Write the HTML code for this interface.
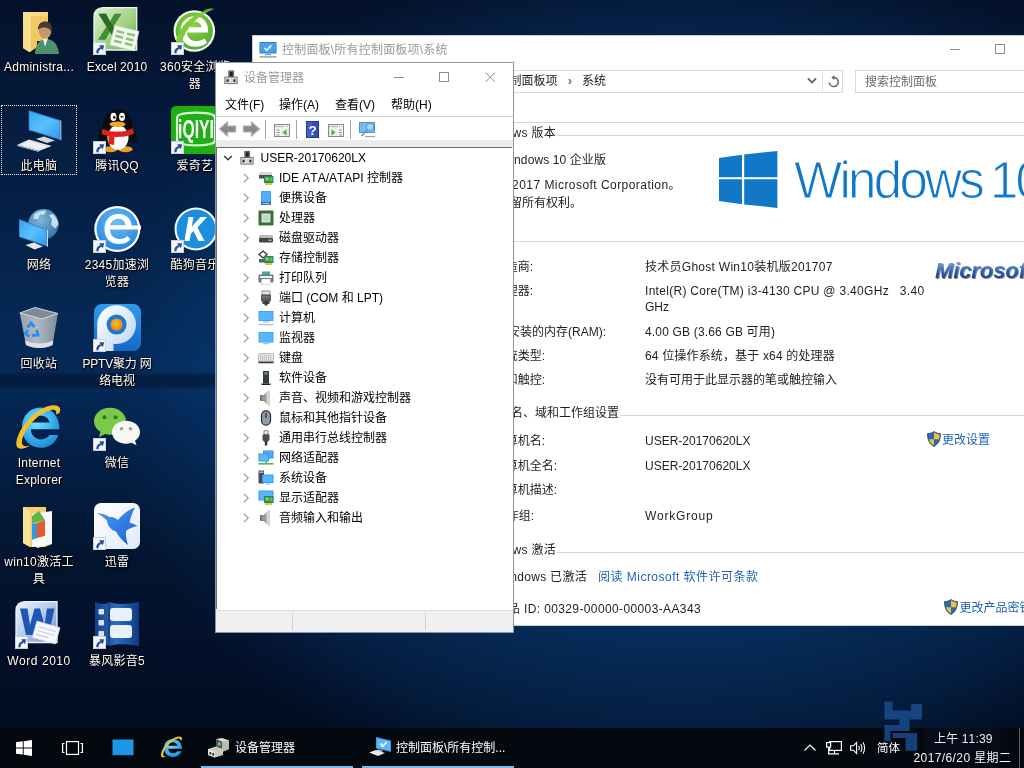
<!DOCTYPE html>
<html lang="zh-CN">
<head>
<meta charset="utf-8">
<title>桌面</title>
<style>
*{box-sizing:border-box;margin:0;padding:0}
html,body{width:1024px;height:768px;overflow:hidden}
body{position:relative;font-family:"Liberation Sans","Noto Sans CJK SC",sans-serif;font-size:12px;color:#000;background:#041c40;font-kerning:none;text-rendering:optimizeSpeed;-webkit-font-smoothing:antialiased}
.a{position:absolute;white-space:nowrap}
#icons,#sys,#dm,#tb{will-change:transform}
svg{display:block;overflow:visible}
#wall{position:absolute;left:0;top:0;width:1024px;height:768px;
 background:
  linear-gradient(180deg, rgba(2,14,36,0) 371px, rgba(2,14,36,.5) 376px, rgba(2,14,36,.5) 385px, rgba(2,14,36,0) 390px),
  radial-gradient(ellipse 570px 450px at 680px 385px, rgba(10,84,156,.5) 0%, rgba(10,84,156,.46) 50%, rgba(10,84,156,.3) 70%, rgba(10,84,156,.2) 82%, rgba(10,84,156,.08) 92%, rgba(10,84,156,0) 100%),
  linear-gradient(180deg,#04112a 0px,#041634 60px,#041c40 150px,#052752 300px,#052a5a 370px,#042048 450px,#03152f 560px,#03102a 650px,#020c20 728px);
}
/* desktop icons */
.di{position:absolute;width:78px;height:90px;color:#fff;font-size:12px;line-height:17px;text-shadow:1px 1px 1px rgba(0,0,0,.95),0 1px 3px rgba(0,0,0,.9),0 0 2px rgba(0,0,0,.7);}
.di svg{position:absolute;left:15px;top:0;width:48px;height:48px}
.di span{position:absolute;left:-11px;width:100px;top:52px;text-align:center;white-space:nowrap;letter-spacing:.25px}
.sel{border:1px dotted #e8eef6;background:rgba(90,130,190,.04)}
.di svg text{text-shadow:none}
/* taskbar */
#tb{position:absolute;left:0;top:728px;width:1024px;height:40px;background:#04080f;color:#fff;}
.pg2{position:absolute;left:0;top:-728px;width:1024px;height:768px}
.tt{line-height:18px;color:#fff}
/* windows */
.win{position:absolute;background:#fff;overflow:hidden}
#sys{left:252px;top:35px;width:780px;height:591px;border:1px solid #c9ced6;border-right:0}
#dm{left:215px;top:62px;width:299px;height:571px;border:1px solid #8e96a6;}
.pg{position:absolute;left:-253px;top:-36px;width:1024px;height:768px}
#sys .tx{line-height:18px;color:#1e1e1e}
#sys .lk{line-height:18px;color:#1f62b0}
#sys .hl{height:1px;background:#d6d6d6}
#sys .sep{color:#666;margin:0 10px 0 10.5px;font-size:12px;font-weight:bold}
.wlogo{font-size:51px;line-height:58px;color:#1078c6;letter-spacing:-2.7px;word-spacing:-3.5px;-webkit-text-stroke:1px #fff}
.mslogo{font-size:22px;line-height:26px;font-weight:bold;font-style:italic;letter-spacing:-.1px;color:#2a5ea6;background:linear-gradient(180deg,#6f9fdc 20%,#2f62ae 50%,#173a7c 85%);-webkit-background-clip:text;background-clip:text;-webkit-text-fill-color:transparent;filter:drop-shadow(1px 1px .6px rgba(30,45,80,.6))}
/* device manager */
#dm .title{left:28px;top:6px;font-size:12px;line-height:18px;color:#999}
#dm .menu{top:33px;line-height:18px;font-size:12px}
#dm .tbar{left:0;top:53px;width:297px;height:25px;background:#fff;border-top:1px solid #cfcfcf}
#dm .gap{left:0;top:77px;width:297px;height:7px;background:#ececec}
#dm .tree{left:0px;top:84px;width:296px;height:462px;background:#fff;border-top:1px solid #6a6d72;border-left:1px solid #6a6d72}
#dm .status{left:0;top:547px;width:297px;height:22px;background:#f0f0f0;border-top:1px solid #dcdcdc}
.row{position:absolute;left:0;height:20px;line-height:20px;white-space:nowrap;font-size:12px}
.row .ch{position:absolute;left:24px;top:5px;width:10px;height:10px}
.row .ic{position:absolute;left:41px;top:2px;width:16px;height:16px}
.row .tx{position:absolute;left:62px;top:0}
</style>
</head>
<body>
<div id="wall"></div>
<svg width="0" height="0" style="position:absolute"><defs>
<linearGradient id="gFold" x1="0" y1="0" x2="1" y2="1"><stop offset="0" stop-color="#fbe39a"/><stop offset="1" stop-color="#efc45c"/></linearGradient>
<linearGradient id="gScr" x1="0" y1="0" x2="1" y2="1"><stop offset="0" stop-color="#3aa5f5"/><stop offset=".5" stop-color="#5cc0ff"/><stop offset="1" stop-color="#2e9bf0"/></linearGradient>
<radialGradient id="g360" cx=".45" cy=".35" r=".75"><stop offset="0" stop-color="#8ed448"/><stop offset="1" stop-color="#4aa52a"/></radialGradient>
<radialGradient id="g2345" cx=".5" cy=".35" r=".75"><stop offset="0" stop-color="#6cc0f8"/><stop offset="1" stop-color="#1f7fd8"/></radialGradient>
<linearGradient id="gXl" x1="0" y1="0" x2="1" y2="1"><stop offset="0" stop-color="#e4f0d8"/><stop offset=".5" stop-color="#a8d48e"/><stop offset="1" stop-color="#5fae4c"/></linearGradient>
<linearGradient id="gWd" x1="0" y1="0" x2="1" y2="1"><stop offset="0" stop-color="#eef3fb"/><stop offset=".5" stop-color="#b4c8ea"/><stop offset="1" stop-color="#5f8ad0"/></linearGradient>
<linearGradient id="gPP" x1="0" y1="0" x2="0" y2="1"><stop offset="0" stop-color="#2f9cec"/><stop offset="1" stop-color="#1668c8"/></linearGradient>
<linearGradient id="gPw" x1="0" y1="0" x2="1" y2="1"><stop offset="0" stop-color="#ffffff"/><stop offset="1" stop-color="#b8d4f0"/></linearGradient>
<radialGradient id="gOr" cx=".45" cy=".4" r=".6"><stop offset="0" stop-color="#ffc21a"/><stop offset="1" stop-color="#f07c0a"/></radialGradient>
<radialGradient id="gIE" cx=".4" cy=".35" r=".8"><stop offset="0" stop-color="#7fe0ff"/><stop offset=".6" stop-color="#2fa8ea"/><stop offset="1" stop-color="#1a78c8"/></radialGradient>
<linearGradient id="gBin" x1="0" y1="0" x2="1" y2="0"><stop offset="0" stop-color="#a6afb8"/><stop offset=".45" stop-color="#c3c9cf"/><stop offset="1" stop-color="#8e98a2"/></linearGradient>
<linearGradient id="gXun" x1="0" y1="0" x2="1" y2="1"><stop offset="0" stop-color="#ffffff"/><stop offset="1" stop-color="#dfeaf8"/></linearGradient>
<linearGradient id="gBird" x1="0" y1="0" x2="1" y2="1"><stop offset="0" stop-color="#4a9cf0"/><stop offset="1" stop-color="#1f5fd8"/></linearGradient>
<linearGradient id="gBf" x1="0" y1="0" x2="1" y2="0"><stop offset="0" stop-color="#123f86"/><stop offset=".5" stop-color="#2a6fc0"/><stop offset="1" stop-color="#0f3a80"/></linearGradient>
<radialGradient id="gGlobe" cx=".4" cy=".35" r=".75"><stop offset="0" stop-color="#7fb8d8"/><stop offset="1" stop-color="#2f6f9c"/></radialGradient>
<symbol id="sc" viewBox="0 0 13 13"><rect x="0" y="0" width="13" height="13" fill="#f4f6f8"/><rect x=".5" y=".5" width="12" height="12" fill="none" stroke="#c9d0d8"/><path d="M3.300 11.300 C3 8 4.600 5.800 7.300 5.200 L6.200 3.300 L11.200 3.200 L9.900 8.200 L8.700 6.700 C6.600 7.300 5.400 8.900 5.600 11.300Z" fill="#274f9c"/></symbol>
</defs></svg>
<div id="icons">
<div class="a sel" style="left:1px;top:105px;width:76px;height:70px"></div>
<div class="di" style="left:0px;top:7px"><svg viewBox="0 0 48 48" width="48" height="48"><path d="M8 5 H33 V34 H22 V40 L14 45 L8 41Z" fill="url(#gFold)"/><path d="M8 5 L15 9 V45 L8 41Z" fill="#f7dc8a"/><path d="M15 9 H33 V34 H22 V40 L15 45Z" fill="#f1c862"/><path d="M15 9 V45" stroke="#fff3c4" stroke-width=".8"/>
<path d="M20 47 C20 37 25 32 31 32 C38 32 43 37 44 47Z" fill="#4e8f6c"/><path d="M28 32 L30 40 L32.500 32Z" fill="#eef4ee"/><ellipse cx="30" cy="24" rx="6.300" ry="7.500" fill="#c9966f"/><path d="M23 23 C22.500 15.500 28 14 31 14.500 C36 15 38 19 36.500 26 C35.500 22 33 20.500 28 20.500 C25.500 20.500 24 21.500 23 23Z" fill="#463c34"/></svg><span>Administra...</span></div>
<div class="di" style="left:78px;top:7px"><svg viewBox="0 0 48 48" width="48" height="48"><path d="M1 9.500 C1 4 4.500 0.700 10 0.700 H43.700 V43 H1Z" fill="url(#gXl)"/><path d="M1 9.500 C1 4 4.500 0.700 10 0.700 H43.700 V43 H1Z" fill="none" stroke="#eef6e8" stroke-width="1.300"/><path d="M5.500 6.700 H13 L17 14.500 L21.500 6.700 H28.700 L20.500 19.500 L29 32.700 H21.500 L17 24.700 L12.500 32.700 H5 L13.500 19.500Z" fill="#3f9230"/><path d="M5.500 6.700 H13 L17 14.500 L20.500 19.500 L29 32.700 H21.500 L17 24.700 L13.500 19.500Z" fill="#2a6e24"/><g transform="rotate(14 31 31)"><rect x="19" y="21" width="25" height="20" fill="#f4f9f1" stroke="#cfe3c8" stroke-width=".6"/><path d="M22 26h8M33 26h8M22 31h8M33 31h8M22 36h8M33 36h8" stroke="#8fc07e" stroke-width="2.500"/></g><use href="#sc" x="0" y="35" width="13" height="13"/></svg><span style="letter-spacing:.1px">Excel 2010</span></div>
<div class="di" style="left:156px;top:7px"><svg viewBox="0 0 48 48" width="48" height="48"><circle cx="23.300" cy="24" r="20.800" fill="#f4fbef"/><circle cx="23.300" cy="24" r="18.600" fill="url(#g360)"/><g transform="translate(23.300 24.500) scale(1.150) translate(-23.500 -25.700)"><path d="M35.500 26.500 H17 C17.600 31.500 21 34 25 34 C28 34 30.500 33 32.500 31.500 L34.500 35.500 C32 37.800 28.500 39 24.500 39 C16.500 39 11.500 33.500 11.500 25.500 C11.500 18 16.500 12.500 24 12.500 C31.500 12.500 35.800 18 35.500 26.500Z M17.300 22 H29.800 C29.300 19 27.200 17.200 24 17.200 C20.800 17.200 18.200 19 17.300 22Z" fill="#fff"/></g><path d="M5 35 C7 21 21 5 43 2 C29 7 15 19 10 37Z" fill="#7ccc3c"/><path d="M43 2 C39 1 35 2 31 4 C36 3.500 40 3 43 2Z" fill="#5db52e"/><use href="#sc" x="0" y="35" width="13" height="13"/></svg><span>360安全浏览<br>器</span></div>
<div class="di" style="left:0px;top:106px"><svg viewBox="0 0 48 48" width="48" height="48"><path d="M13.700 4.200 L45.400 14.200 V34 L13.700 24.200Z" fill="#2b8fe0"/><path d="M14.700 5.700 L44.300 15 V32.500 L14.700 23.200Z" fill="url(#gScr)"/><path d="M45.400 14.200 L46.300 14.600 V34.400 L45.400 34Z" fill="#d9e6f2"/><path d="M20.800 33 L29 30.600 L40 34.500 L32 37Z" fill="#d6d9dc"/><path d="M2 39 L14 33.500 L36.600 40 L24 45Z" fill="#eef0f2"/><path d="M5 39 L14 35 L33 40.200 L24 43.800Z" fill="none" stroke="#c6cace" stroke-width=".7" stroke-dasharray="1.500 1"/><path d="M2 39 L24 45 V46 L2 40Z" fill="#b4b9be"/></svg><span>此电脑</span></div>
<div class="di" style="left:78px;top:106px"><svg viewBox="0 0 48 48" width="48" height="48"><g transform="translate(0.500 -4.500) scale(1 1.060)"><ellipse cx="24" cy="26" rx="15" ry="19" fill="#0c0c0c"/><ellipse cx="9.500" cy="31" rx="4" ry="9" transform="rotate(18 9.500 31)" fill="#0c0c0c"/><ellipse cx="38.500" cy="31" rx="4" ry="9" transform="rotate(-18 38.500 31)" fill="#0c0c0c"/><ellipse cx="17" cy="45" rx="7" ry="2.800" fill="#e9a11a"/><ellipse cx="32" cy="45" rx="7" ry="2.800" fill="#e9a11a"/><ellipse cx="24.500" cy="34" rx="10.500" ry="11.500" fill="#fdfdfd"/><ellipse cx="20" cy="14.500" rx="3" ry="4" fill="#fff"/><ellipse cx="28.500" cy="14.500" rx="3" ry="4" fill="#fff"/><circle cx="20.800" cy="15" r="1.300" fill="#111"/><path d="M27 15 q1.500 -1.500 3 0" stroke="#111" stroke-width="1" fill="none"/><ellipse cx="24" cy="21.500" rx="8" ry="2.600" fill="#f3a91c"/><path d="M9 25.500 C15 29.500 33 29.500 39.500 25 L40.500 30 C33 34.500 16 34.500 8 30.500Z" fill="#e0201c"/><path d="M15 32 L21 33 L20.500 41 L15 40Z" fill="#e0201c"/></g><use href="#sc" x="0" y="35" width="13" height="13"/></svg><span>腾讯QQ</span></div>
<div class="di" style="left:156px;top:106px"><svg viewBox="0 0 48 48" width="48" height="48"><rect x="0" y="0" width="48" height="48" rx="5" fill="#1fae14"/><path d="M9 8.500 C18 6 34 6 41 8.500 C43.500 9.200 44 10.500 44 12.500 V33.500 C44 36 43 37 41 37.500 C34 40 18 40 9 37.500 C6.500 36.800 6 35.500 6 33.500 V12.500 C6 10.500 6.800 9.100 9 8.500Z" fill="none" stroke="#d9f5d4" stroke-width="2.200"/><text x="25" y="32.300" font-family="Liberation Sans,sans-serif" font-weight="bold" font-size="25" fill="#fff" text-anchor="middle" textLength="36" lengthAdjust="spacingAndGlyphs">iQIYI</text><use href="#sc" x="0" y="35" width="13" height="13"/></svg><span>爱奇艺</span></div>
<div class="di" style="left:0px;top:205px"><svg viewBox="0 0 48 48" width="48" height="48"><circle cx="28.400" cy="19.300" r="15.300" fill="url(#gGlobe)"/><path d="M19 9.500 C23 6 27.500 5 31.500 5.500 L29 10 L25 9.500 L23 14 L18.500 14Z M34 10 L38 9 C41 12 43 15.500 43.500 19.500 L40 23.500 L36 19.500 L37 14.500Z" fill="#c4e0ee"/><path d="M4 14 L32 24.500 V41.500 L4 32Z" fill="#2b8fe0"/><path d="M5 15.500 L31 25.300 V40 L5 31.200Z" fill="url(#gScr)"/><path d="M32 24.500 L33 25 V41.800 L32 41.500Z" fill="#cfe0ee"/><path d="M10.500 40 L19 37.500 L28 41.500 L19.500 44.500Z" fill="#e4e7ea"/></svg><span>网络</span></div>
<div class="di" style="left:78px;top:205px"><svg viewBox="0 0 48 48" width="48" height="48"><circle cx="24.300" cy="24" r="23" fill="#fff"/><circle cx="24.300" cy="24" r="20.800" fill="url(#g2345)"/><path d="M48 24.500 H17 C17.500 30.500 21 34 26.500 34 C30 34 32.500 32.800 34.500 31 L37.500 34.500 C34.500 37.500 30.500 39 26 39 C17 39 11.500 33 11.500 24 C11.500 15 17 9 25.500 9 C33.500 9 38.500 14.500 38.500 20.500 H48Z M17.300 20.300 H32.500 C31.800 16 29.300 13.800 25.500 13.800 C21.700 13.800 18.300 16 17.300 20.300Z" fill="#fff"/><use href="#sc" x="0" y="35" width="13" height="13"/></svg><span>2345加速浏<br>览器</span></div>
<div class="di" style="left:156px;top:205px"><svg viewBox="0 0 48 48" width="48" height="48"><circle cx="25" cy="24" r="21.500" fill="#fff"/><circle cx="25" cy="24" r="19.500" fill="#1b8ee0"/><path d="M17.500 12 H22.500 L20.800 21.500 L29.500 12 H36 L26.500 22.500 L33.500 36 H27.500 L22.500 26 L19.800 29 L18.500 36 H13.500Z" fill="#fff"/><use href="#sc" x="0" y="35" width="13" height="13"/></svg><span>酷狗音乐</span></div>
<div class="di" style="left:0px;top:304px"><svg viewBox="0 0 48 48" width="48" height="48"><path d="M4.800 9 L42.900 9.500 L37.500 41 C30 45 19 45 11 41Z" fill="url(#gBin)" opacity=".9"/><path d="M4.800 9 L20 3.500 L42.900 9.500 L27 15Z" fill="#7f8a94" stroke="#d4d9de" stroke-width="1"/><path d="M10 36.500 C19 40.500 30 40.500 38.300 36.500 L37.500 41 C30 45 19 45 11 41Z" fill="#dde1e5"/><g fill="none" stroke="#2a8ee8" stroke-width="2.800"><path d="M12.500 23.500 l3.500 -4.500 l3.500 4"/><path d="M21.500 26 l1.500 5 l-6 .5"/><path d="M14.500 32.500 l-4 -3 l2 -3.500"/></g></svg><span>回收站</span></div>
<div class="di" style="left:78px;top:304px"><svg viewBox="0 0 48 48" width="48" height="48"><rect x="1" y="0" width="47" height="47" rx="8" fill="url(#gPP)"/><clipPath id="cpp"><rect x="1" y="0" width="47" height="47" rx="8"/></clipPath><g clip-path="url(#cpp)"><path d="M4.200 48 V20.600 A19.400 19.400 0 1 1 20.500 39.700 V48Z" fill="url(#gPw)"/></g><circle cx="23.600" cy="20.600" r="10" fill="#1b78d4"/><circle cx="23.600" cy="20.600" r="6.100" fill="url(#gOr)"/><use href="#sc" x="0" y="35" width="13" height="13"/></svg><span style="letter-spacing:-.2px">PPTV聚力 网<br>络电视</span></div>
<div class="di" style="left:0px;top:403px"><svg viewBox="0 0 48 48" width="48" height="48"><g transform="translate(0 -4.500) scale(1.040 1.120) translate(-1.300 0)"><path d="M44 27.500 H16.500 C17 33 20.500 36.500 26 36.500 C29.500 36.500 32.500 35 34.500 32.500 H43 C40.500 39.500 34 44 26 44 C15.500 44 8 36.500 8 26 C8 15.500 15.500 8 26 8 C36.500 8 44 15.500 44 27.500Z M17.500 21.500 H34.500 C33.500 17.500 30.500 15.500 26 15.500 C21.500 15.500 18.500 17.500 17.500 21.500Z" fill="url(#gIE)"/></g><path d="M44.500 10 C47.500 3 41 0 30.500 4 C17 9.500 3.500 26 1.500 38.500 C0 47 7 47.500 15 42.500 C8.500 44.500 5.500 42 7.500 35.500 C10.500 25.500 20.500 13 31.500 8.500 C38.500 5.500 42.500 6.500 41 11.500Z" fill="#f0c02c"/></svg><span>Internet <br>Explorer</span></div>
<div class="di" style="left:78px;top:403px"><svg viewBox="0 0 48 48" width="48" height="48"><g transform="translate(0 2.700)"><path d="M17 2 C26 2 33 8 33 15.500 C33 23 26 29 17 29 C15.200 29 13.500 28.800 12 28.300 L6 31.500 L7.500 26 C3.500 23.500 1 19.800 1 15.500 C1 8 8 2 17 2Z" fill="#7bc84a"/><circle cx="11.500" cy="11.500" r="2" fill="#2e7d1e"/><circle cx="22.500" cy="11.500" r="2" fill="#2e7d1e"/><path d="M33 15 C41 15 47 20 47 26.500 C47 30 45 33 42 35 L43.500 39.500 L38.500 37 C36.800 37.600 35 38 33 38 C25 38 19 33 19 26.500 C19 20 25 15 33 15Z" fill="#f6f6f2"/><circle cx="28.500" cy="23" r="1.700" fill="#9a9a9a"/><circle cx="37.500" cy="23" r="1.700" fill="#9a9a9a"/></g><use href="#sc" x="0" y="35" width="13" height="13"/></svg><span>微信</span></div>
<div class="di" style="left:0px;top:502px"><svg viewBox="0 0 48 48" width="48" height="48"><path d="M8 5 H31 V10 H37 V42 L30 45 L15 45 L8 41Z" fill="#f2cf72"/><path d="M8 5 L15 9 V45 L8 41Z" fill="#f8e19a"/><path d="M17 12 L37 9 V42 L17 45Z" fill="#f7f7f5"/><path d="M17 14 L24 9 L30 18 L17 22Z" fill="#5fb548"/><path d="M17 22 L22 21 V36 L17 38Z" fill="#2f9ae0"/><path d="M22 21 L30 18 V34 L22 36Z" fill="#e8582c"/><path d="M17 38 L30 34 V44 L22 46Z" fill="#fbfbfb"/></svg><span>win10激活工<br>具</span></div>
<div class="di" style="left:78px;top:502px"><svg viewBox="0 0 48 48" width="48" height="48"><rect x="1" y="1" width="46" height="46" rx="7" fill="url(#gXun)"/><path d="M4 11 C9 11.500 13 12.500 16.500 15 C20 14.500 23 16 25 18 C30 12 36 7.500 42 5.500 C39 11 37.500 16 36.500 20.500 C39.500 21.500 42 22.500 44.500 24 C40 25 36 26.500 33 29 C32.500 33.500 33.500 38 35 43 C30 39 25.500 34.500 23 29.500 C18 28 14.500 24 14 18.500 C11 15.500 8 13.500 4 11Z" fill="url(#gBird)"/><use href="#sc" x="0" y="35" width="13" height="13"/></svg><span>迅雷</span></div>
<div class="di" style="left:0px;top:601px"><svg viewBox="0 0 48 48" width="48" height="48"><path d="M1 9.500 C1 4 4.500 0.700 10 0.700 H42 V41.500 H1Z" fill="url(#gWd)"/><path d="M1 9.500 C1 4 4.500 0.700 10 0.700 H42 V41.500 H1Z" fill="none" stroke="#eef3fb" stroke-width="1.300"/><path d="M5 7.500 H12.500 L15 24 L19.500 7.500 H25 L29.500 24 L32 7.500 H39.500 L33.500 34 H26 L22.200 19.500 L18.500 34 H11Z" fill="#1f56b4"/><g transform="rotate(16 31 32)"><rect x="19" y="23" width="24" height="17" fill="#f7f9fd" stroke="#cfdaf0" stroke-width=".6"/><path d="M22 28h18M22 32h18M22 36h13" stroke="#c4d2ea" stroke-width="1.200"/></g><use href="#sc" x="0" y="35" width="13" height="13"/></svg><span style="letter-spacing:.55px">Word 2010</span></div>
<div class="di" style="left:78px;top:601px"><svg viewBox="0 0 48 48" width="48" height="48"><path d="M2 1 C8 3.500 12 3.500 16 1 C24 3.500 32 3.500 46 1 V45 C32 42.500 24 42.500 16 45 C12 42.500 8 42.500 2 45Z" fill="url(#gBf)"/><rect x="5.500" y="8" width="5.500" height="5.500" rx=".8" fill="#d6e4f6"/><rect x="5.500" y="19" width="5.500" height="5.500" rx=".8" fill="#d6e4f6"/><rect x="5.500" y="30" width="5.500" height="5.500" rx=".8" fill="#d6e4f6"/><rect x="17" y="7" width="22" height="13" rx="3" fill="#e9f0fa"/><rect x="17" y="24" width="22" height="13" rx="3" fill="#e9f0fa"/><path d="M16 1 V45" stroke="#0b2f6c" stroke-width="1"/><use href="#sc" x="0" y="35" width="13" height="13"/></svg><span>暴风影音5</span></div>
</div>
<div class="win" id="sys"><div class="pg">
<svg class="a" style="left:259px;top:41px" width="18" height="18" viewBox="0 0 18 18"><rect x="1" y="1.500" width="16" height="10.500" fill="#4aa3ea" stroke="#2f7fc8" stroke-width="1"/><path d="M5.500 7 l2.300 2.300 4.500-5" stroke="#eaf6ff" stroke-width="1.600" fill="none"/><rect x="6" y="13" width="6" height="1.200" fill="#5aa0d8"/><rect x="0.500" y="15.200" width="17" height="1.400" fill="#9a9a9a"/></svg>
<div class="a" style="left:282px;top:41px;line-height:18px;color:#999;letter-spacing:.2px">控制面板\所有控制面板项\系统</div>
<svg class="a" style="left:950px;top:44px" width="102" height="11" viewBox="0 0 102 11"><path d="M0 5.500h10" stroke="#8c8c8c" fill="none"/><rect x="45.500" y="0.500" width="9" height="9" fill="none" stroke="#8c8c8c"/><path d="M91.500 0.500 l9.500 9.500 M101 0.500 L91.500 10" stroke="#8c8c8c" fill="none"/></svg>
<svg class="a" style="left:262px;top:72px" width="90" height="18" viewBox="0 0 90 18"><path d="M13 9H3M7 5 3 9l4 4" stroke="#8a8a8a" stroke-width="1.300" fill="none"/><path d="M29 9h10M35 5l4 4-4 4" stroke="#c2c2c2" stroke-width="1.300" fill="none"/><path d="M52 8l3 3 3-3" stroke="#8a8a8a" fill="none"/><path d="M74 14V4M70 8l4-4 4 4" stroke="#8a8a8a" stroke-width="1.300" fill="none"/></svg>
<div class="a" style="left:357px;top:70px;width:486px;height:23px;border:1px solid #d9d9d9;background:#fff"></div>
<svg class="a" style="left:362px;top:73px" width="16" height="16" viewBox="0 0 18 18"><rect x="1" y="1.500" width="16" height="10.500" fill="#4aa3ea" stroke="#2f7fc8"/><path d="M5.500 7 l2.300 2.300 4.500-5" stroke="#eaf6ff" stroke-width="1.600" fill="none"/><rect x="0.500" y="15" width="17" height="1.400" fill="#9a9a9a"/></svg>
<div class="a" style="right:418px;top:72px;line-height:18px;color:#1a1a1a">所有控制面板项<span class="sep">›</span>系统</div>
<i class="a" style="left:822px;top:71px;width:1px;height:21px;background:#e0e0e0"></i>
<svg class="a" style="left:807px;top:77px" width="10" height="8" viewBox="0 0 10 8"><path d="M1 1.500l4 4 4-4" stroke="#6a6a6a" stroke-width="1.900" fill="none"/></svg>
<svg class="a" style="left:827px;top:74px" width="13" height="14" viewBox="0 0 13 14"><g transform="translate(13 1) scale(-1 1)"><path d="M10.800 7.500a4.500 4.500 0 1 1-4.300-5" stroke="#666" stroke-width="1.500" fill="none"/><path d="M5.500 0.300l3.200 2.300-3.200 2.300z" fill="#666"/></g></svg>
<div class="a" style="left:855px;top:70px;width:190px;height:23px;border:1px solid #d9d9d9;background:#fff"></div>
<div class="a" style="left:865px;top:73px;line-height:18px;color:#6d6d6d">搜索控制面板</div>
<i class="a hl" style="left:253px;top:122px;width:780px"></i>
<div class="a tx" style="right:468px;top:124px;letter-spacing:0.3px;">Windows 版本</div>
<i class="a hl" style="left:557px;top:135px;width:480px"></i>
<div class="a tx" style="right:418px;top:151px;letter-spacing:0.1px;">Windows 10 企业版</div>
<div class="a tx" style="right:343px;top:176px;letter-spacing:0.45px;">© 2017 Microsoft Corporation。</div>
<div class="a tx" style="right:442px;top:194px;">保留所有权利。</div>
<svg class="a" style="left:719px;top:151px" width="60" height="58" viewBox="0 0 60 58"><path d="M0 6.900 L23 3.700 V26.200 H0Z M25.200 3.400 L58.400 0 V26.200 H25.200Z M0 28.300 H23 V53.200 L0 50Z M25.200 28.300 H58.400 V56.900 L25.200 53.500Z" fill="#1078c6"/></svg>
<div class="a wlogo" style="left:794px;top:152px">Windows 10</div>
<i class="a hl" style="left:470px;top:241px;width:560px"></i>
<div class="a tx" style="right:491px;top:258px;">制造商:</div>
<div class="a tx" style="left:645px;top:258px;letter-spacing:0.27px;">技术员Ghost Win10装机版201707</div>
<div class="a tx" style="right:491px;top:282px;">处理器:</div>
<div class="a tx" style="left:645px;top:282px;letter-spacing:0.3px;">Intel(R) Core(TM) i3-4130 CPU @ 3.40GHz&nbsp;&nbsp; 3.40</div>
<div class="a tx" style="left:645px;top:298px;">GHz</div>
<div class="a tx" style="right:418px;top:323px;">已安装的内存(RAM):</div>
<div class="a tx" style="left:645px;top:323px;letter-spacing:0.17px;">4.00 GB (3.66 GB 可用)</div>
<div class="a tx" style="right:479px;top:347px;">系统类型:</div>
<div class="a tx" style="left:645px;top:347px;letter-spacing:0.16px;">64 位操作系统，基于 x64 的处理器</div>
<div class="a tx" style="right:479px;top:371px;">笔和触控:</div>
<div class="a tx" style="left:645px;top:371px;">没有可用于此显示器的笔或触控输入</div>
<div class="a mslogo" style="left:935px;top:258px">Microsoft</div>
<div class="a tx" style="right:405px;top:404px;">计算机名、域和工作组设置</div>
<i class="a hl" style="left:620px;top:415px;width:480px"></i>
<div class="a tx" style="right:479px;top:432px;">计算机名:</div>
<div class="a tx" style="left:645px;top:432px;">USER-20170620LX</div>
<div class="a tx" style="right:467px;top:457px;">计算机全名:</div>
<div class="a tx" style="left:645px;top:457px;">USER-20170620LX</div>
<div class="a tx" style="right:467px;top:481px;">计算机描述:</div>
<div class="a tx" style="right:490px;top:507px;">工作组:</div>
<div class="a tx" style="left:645px;top:507px;letter-spacing:0.78px;">WorkGroup</div>
<svg class="a" style="left:927px;top:431px" width="14" height="16" viewBox="0 0 14 16"><path d="M7 0.500 C9 2 11 2.600 13.500 2.600 C13.500 9 11.500 13 7 15.500 C2.500 13 0.500 9 0.500 2.600 C3 2.600 5 2 7 0.500Z" fill="#2b68b8" stroke="#3a3f46" stroke-width=".8"/><path d="M7 1.500 C5.200 2.700 3.500 3.300 1.400 3.400 C1.400 5.300 1.600 6.800 2 8.200 H7Z" fill="#2b68b8"/><path d="M7 1.500 C8.800 2.700 10.500 3.300 12.600 3.400 C12.600 5.300 12.400 6.800 12 8.200 H7Z" fill="#f2c13c"/><path d="M2 8.200 C2.900 11 4.500 13 7 14.500 V8.200Z" fill="#f2c13c"/></svg>
<div class="a lk" style="left:942px;top:431px">更改设置</div>
<div class="a tx" style="right:468px;top:541px;letter-spacing:0.3px;">Windows 激活</div>
<i class="a hl" style="left:557px;top:552px;width:480px"></i>
<div class="a tx" style="right:437px;top:568px;letter-spacing:0.3px;">Windows 已激活</div>
<div class="a lk" style="left:598px;top:568px;letter-spacing:.48px">阅读 Microsoft 软件许可条款</div>
<div class="a tx" style="right:323px;top:600px;letter-spacing:0.38px;">产品 ID: 00329-00000-00003-AA343</div>
<svg class="a" style="left:944px;top:599px" width="14" height="16" viewBox="0 0 14 16"><path d="M7 0.500 C9 2 11 2.600 13.500 2.600 C13.500 9 11.500 13 7 15.500 C2.500 13 0.500 9 0.500 2.600 C3 2.600 5 2 7 0.500Z" fill="#2b68b8" stroke="#3a3f46" stroke-width=".8"/><path d="M7 1.500 C5.200 2.700 3.500 3.300 1.400 3.400 C1.400 5.300 1.600 6.800 2 8.200 H7Z" fill="#2b68b8"/><path d="M7 1.500 C8.800 2.700 10.500 3.300 12.600 3.400 C12.600 5.300 12.400 6.800 12 8.200 H7Z" fill="#f2c13c"/><path d="M2 8.200 C2.900 11 4.500 13 7 14.500 V8.200Z" fill="#f2c13c"/></svg>
<div class="a lk" style="left:959.500px;top:599px">更改产品密钥</div>
</div></div>
<div class="win" id="dm">
<svg class="a" style="left:8px;top:7px" viewBox="0 0 16 16" width="14" height="15"><rect x="5.5" y="0.5" width="5.5" height="7" fill="#8a8a8a" stroke="#555" stroke-width="1"/><rect x="6.500" y="1.500" width="3.500" height="5" fill="#1e1e1e"/><rect x="1" y="7.5" width="14" height="7.5" fill="#d9d9d9" stroke="#666" stroke-width="1"/><rect x="3" y="10" width="2.2" height="3" fill="#222"/><rect x="10.8" y="10" width="2.2" height="3" fill="#222"/></svg>
<div class="a title">设备管理器</div>
<svg class="a" style="left:178px;top:9px" width="102" height="11" viewBox="0 0 102 11"><path d="M0 5.5h10" stroke="#8c8c8c" stroke-width="1" fill="none"/><rect x="45.500" y="0.500" width="9" height="9" fill="none" stroke="#8c8c8c"/><path d="M91.500 0.500 l9.500 9.500 M101 0.500 L91.500 10" stroke="#8c8c8c" stroke-width="1" fill="none"/></svg>
<div class="a menu" style="left:9px">文件(F)</div>
<div class="a menu" style="left:63px">操作(A)</div>
<div class="a menu" style="left:119px">查看(V)</div>
<div class="a menu" style="left:175px">帮助(H)</div>
<div class="a tbar"></div>
<svg class="a" style="left:0;top:55px" width="297" height="23" viewBox="0 0 297 23">
<path d="M3.500 11 L11.500 4 V8 H19.500 V14 H11.500 V18 Z" fill="#898989" stroke="#adadad" stroke-width="1.200"/>
<path d="M43.500 11 L35.500 4 V8 H27.500 V14 H35.500 V18 Z" fill="#898989" stroke="#adadad" stroke-width="1.200"/>
<path d="M49.500 2v19M80.500 2v19M134.500 2v19" stroke="#a4a4a4" stroke-width="1"/>
<rect x="58.500" y="6.500" width="15" height="12" fill="#f7f8f7" stroke="#868a8e"/><path d="M59 8.500h14" stroke="#b9bcc0" stroke-width="1.600" stroke-dasharray="9 1 1 1 1 1"/><path d="M60.500 12h3M60.500 14.500h3M60.500 17h3" stroke="#8c9298" stroke-width="1"/><rect x="65" y="10.500" width="8" height="7.500" fill="#e3f1da"/><path d="M70.500 11.500 l-4 3 4 3z" fill="#5aa34a"/>
<rect x="90.500" y="3.500" width="12" height="16" fill="#3450b8" stroke="#26388c"/><rect x="91" y="4" width="5" height="15" fill="#4a68d0" opacity=".6"/><text x="96.500" y="16.500" font-family="Liberation Sans,sans-serif" font-weight="bold" font-size="13.500" fill="#fff" text-anchor="middle">?</text>
<rect x="112.500" y="6.500" width="15" height="12" fill="#f7f8f7" stroke="#868a8e"/><path d="M113 8.500h14" stroke="#b9bcc0" stroke-width="1.600" stroke-dasharray="9 1 1 1 1 1"/><rect x="113" y="10.500" width="8" height="7.500" fill="#e3f1da"/><path d="M115.500 11.500 l4 3 -4 3z" fill="#5aa34a"/><path d="M123 12h3M123 14.500h3M123 17h3" stroke="#8c9298" stroke-width="1"/>
<rect x="143.500" y="4.500" width="15" height="10" fill="#74bdf0" stroke="#4a94d0"/><circle cx="154" cy="9" r="3.600" fill="#a9dafa" stroke="#4f9bd6" stroke-width="1"/><path d="M151.500 11.500 L145.500 18" stroke="#6f8fa8" stroke-width="1.600"/><path d="M149 18.500h10" stroke="#9aa4ac" stroke-width="1.200"/>
</svg>
<div class="a gap"></div>
<div class="a tree">
<div class="row" style="top:0px"><svg viewBox="0 0 10 10" width="10" height="10" style="position:absolute;left:6px;top:5px"><path d="M1.200 3 L5 6.800 L8.800 3" fill="none" stroke="#3a3a3a" stroke-width="1.500"/></svg><svg viewBox="0 0 16 16" width="14" height="16" style="position:absolute;left:23px;top:2px"><rect x="5.5" y="0.5" width="5.5" height="7" fill="#8a8a8a" stroke="#555" stroke-width="1"/><rect x="6.500" y="1.500" width="3.500" height="5" fill="#1e1e1e"/><rect x="1" y="7.5" width="14" height="7.5" fill="#d9d9d9" stroke="#666" stroke-width="1"/><rect x="3" y="10" width="2.2" height="3" fill="#222"/><rect x="10.8" y="10" width="2.2" height="3" fill="#222"/></svg><span class="tx" style="left:43.500px">USER-20170620LX</span></div>
<div class="row" style="top:20px"><svg class="ch" viewBox="0 0 10 10" width="10" height="10"><path d="M3 0.8 L7.2 5 L3 9.2" fill="none" stroke="#a6a6a6" stroke-width="1.3"/></svg><svg class="ic" viewBox="0 0 16 16" width="16" height="16"><rect x="1" y="2" width="13" height="4" rx="1" fill="#d8d8d8"/><rect x="1" y="5" width="13" height="3.5" fill="#4a4a4a"/><rect x="6" y="6" width="9.5" height="7" fill="#2f8a3c"/><rect x="7.5" y="7.5" width="3" height="3" fill="#7fd0c8"/><rect x="11.5" y="7.5" width="3" height="4" fill="#5fb86a"/><rect x="7" y="13" width="7" height="2" fill="#e8c63a"/></svg><span class="tx">IDE ATA/ATAPI 控制器</span></div>
<div class="row" style="top:40px"><svg class="ch" viewBox="0 0 10 10" width="10" height="10"><path d="M3 0.8 L7.2 5 L3 9.2" fill="none" stroke="#a6a6a6" stroke-width="1.3"/></svg><svg class="ic" viewBox="0 0 16 16" width="16" height="16"><rect x="3" y="1" width="10" height="14" rx="1" fill="#2f9af0"/><rect x="3.6" y="1.6" width="8.8" height="10" fill="#4fb0ff"/><rect x="3" y="12" width="10" height="3" rx="1" fill="#3a5a8a"/><rect x="4.5" y="12.8" width="7" height="1.4" fill="#9cc4ee"/></svg><span class="tx">便携设备</span></div>
<div class="row" style="top:60px"><svg class="ch" viewBox="0 0 10 10" width="10" height="10"><path d="M3 0.8 L7.2 5 L3 9.2" fill="none" stroke="#a6a6a6" stroke-width="1.3"/></svg><svg class="ic" viewBox="0 0 16 16" width="16" height="16"><rect x="0.5" y="0.5" width="15" height="15" rx="1" fill="#3f6e3a"/><rect x="3.5" y="3.5" width="9" height="9" fill="#d7e6d6"/><rect x="5" y="5" width="6" height="6" fill="#c2d8c6"/></svg><span class="tx">处理器</span></div>
<div class="row" style="top:80px"><svg class="ch" viewBox="0 0 10 10" width="10" height="10"><path d="M3 0.8 L7.2 5 L3 9.2" fill="none" stroke="#a6a6a6" stroke-width="1.3"/></svg><svg class="ic" viewBox="0 0 16 16" width="16" height="16"><rect x="1" y="5" width="14" height="4" rx="1.5" fill="#b9b9b9"/><rect x="1" y="8" width="14" height="4.5" rx="1" fill="#454545"/><rect x="10.5" y="9.6" width="3" height="1.2" fill="#d0d0d0"/></svg><span class="tx">磁盘驱动器</span></div>
<div class="row" style="top:100px"><svg class="ch" viewBox="0 0 10 10" width="10" height="10"><path d="M3 0.8 L7.2 5 L3 9.2" fill="none" stroke="#a6a6a6" stroke-width="1.3"/></svg><svg class="ic" viewBox="0 0 16 16" width="16" height="16"><path d="M5 1 L9 4.5 L5 8 L1 4.5Z" fill="#fff" stroke="#333" stroke-width="1.3"/><rect x="1" y="9" width="6" height="3.5" fill="#4a5f7a"/><rect x="6" y="6" width="9.5" height="7" fill="#2f8a3c"/><rect x="7.5" y="7.5" width="3" height="3" fill="#7fd0c8"/><rect x="11.5" y="7.5" width="3" height="4" fill="#5fb86a"/><rect x="7" y="13" width="7" height="2" fill="#e8c63a"/></svg><span class="tx">存储控制器</span></div>
<div class="row" style="top:120px"><svg class="ch" viewBox="0 0 10 10" width="10" height="10"><path d="M3 0.8 L7.2 5 L3 9.2" fill="none" stroke="#a6a6a6" stroke-width="1.3"/></svg><svg class="ic" viewBox="0 0 16 16" width="16" height="16"><rect x="4" y="1.5" width="8" height="4" fill="#3fa9a6"/><rect x="0.5" y="4.5" width="15" height="8" rx="1" fill="#6f7a7d"/><rect x="2" y="6" width="12" height="2" fill="#e9eeee"/><rect x="3.5" y="9" width="9" height="5.5" fill="#fff" stroke="#caa" stroke-width=".5"/></svg><span class="tx">打印队列</span></div>
<div class="row" style="top:140px"><svg class="ch" viewBox="0 0 10 10" width="10" height="10"><path d="M3 0.8 L7.2 5 L3 9.2" fill="none" stroke="#a6a6a6" stroke-width="1.3"/></svg><svg class="ic" viewBox="0 0 16 16" width="16" height="16"><rect x="4" y="1" width="8" height="4" fill="#e6e6e6" stroke="#777" stroke-width=".8"/><rect x="3" y="4.5" width="10" height="7" rx="1" fill="#595959"/><rect x="4" y="6.5" width="8" height="1" fill="#8a8a8a"/><rect x="4.5" y="11" width="2.5" height="3" fill="#444"/><rect x="9" y="11" width="2.5" height="3" fill="#444"/><rect x="6.5" y="11" width="3" height="4.5" fill="#3a3a3a"/></svg><span class="tx">端口 (COM 和 LPT)</span></div>
<div class="row" style="top:160px"><svg class="ch" viewBox="0 0 10 10" width="10" height="10"><path d="M3 0.8 L7.2 5 L3 9.2" fill="none" stroke="#a6a6a6" stroke-width="1.3"/></svg><svg class="ic" viewBox="0 0 16 16" width="16" height="16"><rect x="0.5" y="1" width="15" height="10" fill="#3aa0f2"/><rect x="1.3" y="1.8" width="13.4" height="8.4" fill="#56b6ff"/><rect x="5" y="11.5" width="6" height="1" fill="#7fb8e8"/><rect x="0.5" y="14" width="15" height="1.2" fill="#b7b7b7"/></svg><span class="tx">计算机</span></div>
<div class="row" style="top:180px"><svg class="ch" viewBox="0 0 10 10" width="10" height="10"><path d="M3 0.8 L7.2 5 L3 9.2" fill="none" stroke="#a6a6a6" stroke-width="1.3"/></svg><svg class="ic" viewBox="0 0 16 16" width="16" height="16"><rect x="0.5" y="2" width="15" height="10.5" fill="#3aa0f2"/><rect x="1.3" y="2.8" width="13.4" height="8.9" fill="#56b6ff"/><rect x="5" y="13.2" width="6" height="1" fill="#7fb8e8"/></svg><span class="tx">监视器</span></div>
<div class="row" style="top:200px"><svg class="ch" viewBox="0 0 10 10" width="10" height="10"><path d="M3 0.8 L7.2 5 L3 9.2" fill="none" stroke="#a6a6a6" stroke-width="1.3"/></svg><svg class="ic" viewBox="0 0 16 16" width="16" height="16"><rect x="0.5" y="3.5" width="15" height="9" rx="1" fill="#e4e4e4" stroke="#9a9a9a" stroke-width=".6"/><path d="M2 6h12M2 8h12M2 10h12" stroke="#aaa" stroke-width="1" stroke-dasharray="1.2 .8"/><rect x="0.5" y="11.5" width="15" height="1.8" fill="#3c3c3c"/></svg><span class="tx">键盘</span></div>
<div class="row" style="top:220px"><svg class="ch" viewBox="0 0 10 10" width="10" height="10"><path d="M3 0.8 L7.2 5 L3 9.2" fill="none" stroke="#a6a6a6" stroke-width="1.3"/></svg><svg class="ic" viewBox="0 0 16 16" width="16" height="16"><rect x="5" y="1" width="6" height="12.5" fill="#33403a"/><rect x="6.2" y="2.2" width="3.6" height="2.5" fill="#6c8a78"/><rect x="3.5" y="13.5" width="9" height="1.5" fill="#222"/></svg><span class="tx">软件设备</span></div>
<div class="row" style="top:240px"><svg class="ch" viewBox="0 0 10 10" width="10" height="10"><path d="M3 0.8 L7.2 5 L3 9.2" fill="none" stroke="#a6a6a6" stroke-width="1.3"/></svg><svg class="ic" viewBox="0 0 16 16" width="16" height="16"><path d="M2 5h3.500L11.500 0v16L5.500 11H2Z" fill="#9b9b9b"/><path d="M8.500 2.500L11.500 0v16L8.500 13.500Z" fill="#d6d6d6"/><rect x="2" y="5" width="2.200" height="6" fill="#7a7a7a"/></svg><span class="tx">声音、视频和游戏控制器</span></div>
<div class="row" style="top:260px"><svg class="ch" viewBox="0 0 10 10" width="10" height="10"><path d="M3 0.8 L7.2 5 L3 9.2" fill="none" stroke="#a6a6a6" stroke-width="1.3"/></svg><svg class="ic" viewBox="0 0 16 16" width="16" height="16"><rect x="3.5" y="0.8" width="9" height="14.4" rx="4.5" fill="#8f9ba6" stroke="#2a2f36" stroke-width="1.2"/><rect x="7.4" y="3" width="1.2" height="5" fill="#2a2f36"/></svg><span class="tx">鼠标和其他指针设备</span></div>
<div class="row" style="top:280px"><svg class="ch" viewBox="0 0 10 10" width="10" height="10"><path d="M3 0.8 L7.2 5 L3 9.2" fill="none" stroke="#a6a6a6" stroke-width="1.3"/></svg><svg class="ic" viewBox="0 0 16 16" width="16" height="16"><rect x="6" y="0.8" width="4" height="3.5" fill="#f2f2f2" stroke="#666" stroke-width=".8"/><path d="M4.5 4.5h7v5.5l-2 2h-3l-2-2Z" fill="#4c4c4c"/><rect x="6.8" y="11.5" width="2.4" height="4" fill="#333"/></svg><span class="tx">通用串行总线控制器</span></div>
<div class="row" style="top:300px"><svg class="ch" viewBox="0 0 10 10" width="10" height="10"><path d="M3 0.8 L7.2 5 L3 9.2" fill="none" stroke="#a6a6a6" stroke-width="1.3"/></svg><svg class="ic" viewBox="0 0 16 16" width="16" height="16"><rect x="5" y="0.5" width="10.5" height="8" fill="#2f8fe4"/><rect x="5.8" y="1.3" width="8.9" height="6.4" fill="#4aa8f5"/><rect x="0.5" y="3.5" width="10.5" height="8" fill="#2f8fe4"/><rect x="1.3" y="4.3" width="8.9" height="6.4" fill="#5bb6ff"/><rect x="0.5" y="13" width="15" height="1.6" fill="#57b84f"/><rect x="7" y="11.5" width="2" height="2" fill="#57b84f"/></svg><span class="tx">网络适配器</span></div>
<div class="row" style="top:320px"><svg class="ch" viewBox="0 0 10 10" width="10" height="10"><path d="M3 0.8 L7.2 5 L3 9.2" fill="none" stroke="#a6a6a6" stroke-width="1.3"/></svg><svg class="ic" viewBox="0 0 16 16" width="16" height="16"><rect x="0.5" y="0.5" width="5.5" height="13" fill="#4b4b55"/><rect x="1.3" y="1.5" width="3.9" height="1.5" fill="#b9b9c5"/><rect x="4" y="4.5" width="11.5" height="8.5" fill="#2f8fe4"/><rect x="4.8" y="5.3" width="9.9" height="6.9" fill="#56b6ff"/><rect x="7.5" y="13.6" width="5" height="1" fill="#7fb8e8"/></svg><span class="tx">系统设备</span></div>
<div class="row" style="top:340px"><svg class="ch" viewBox="0 0 10 10" width="10" height="10"><path d="M3 0.8 L7.2 5 L3 9.2" fill="none" stroke="#a6a6a6" stroke-width="1.3"/></svg><svg class="ic" viewBox="0 0 16 16" width="16" height="16"><rect x="0.5" y="0.5" width="15" height="10" fill="#2f8fe4"/><rect x="1.3" y="1.3" width="13.4" height="8.4" fill="#56b6ff"/><rect x="6" y="6" width="9.5" height="7" fill="#2f8a3c"/><rect x="7.5" y="7.5" width="3" height="3" fill="#7fd0c8"/><rect x="11.5" y="7.5" width="3" height="4" fill="#5fb86a"/><rect x="7" y="13" width="7" height="2" fill="#e8c63a"/></svg><span class="tx">显示适配器</span></div>
<div class="row" style="top:360px"><svg class="ch" viewBox="0 0 10 10" width="10" height="10"><path d="M3 0.8 L7.2 5 L3 9.2" fill="none" stroke="#a6a6a6" stroke-width="1.3"/></svg><svg class="ic" viewBox="0 0 16 16" width="16" height="16"><path d="M2 5h3.500L11.500 0v16L5.500 11H2Z" fill="#9b9b9b"/><path d="M8.500 2.500L11.500 0v16L8.500 13.500Z" fill="#d6d6d6"/><rect x="2" y="5" width="2.200" height="6" fill="#7a7a7a"/></svg><span class="tx">音频输入和输出</span></div>
</div>
<div class="a status"><i class="a" style="left:76px;top:2px;width:1px;height:17px;background:#d0d0d0"></i><i class="a" style="left:209px;top:2px;width:1px;height:17px;background:#d0d0d0"></i></div>
</div>
<div id="tb"><div class="pg2">
<i class="a" style="left:201px;top:766px;width:152px;height:2px;background:#7ab8ea"></i>
<i class="a" style="left:362px;top:766px;width:152px;height:2px;background:#7ab8ea"></i>
<svg class="a" style="left:16px;top:740px" width="16" height="16" viewBox="0 0 16 16"><path d="M0 2.300 L6.800 1.300 V7.500 H0Z M7.700 1.200 L16 0 V7.500 H7.700Z M0 8.400 H6.800 V14.600 L0 13.700Z M7.700 8.400 H16 V16 L7.700 14.800Z" fill="#fff"/></svg>
<svg class="a" style="left:62px;top:741px" width="21" height="14" viewBox="0 0 21 14"><rect x="4.500" y="0.600" width="12" height="12.800" fill="none" stroke="#fff" stroke-width="1.200"/><path d="M2.500 2.500 H0.600 V11.500 H2.500 M18.500 2.500 H20.400 V11.500 H18.500" fill="none" stroke="#fff" stroke-width="1.200"/></svg>
<svg class="a" style="left:112px;top:739px" width="22" height="17" viewBox="0 0 22 17"><rect x="0.500" y="0.500" width="21" height="15.500" fill="#1e96ea"/><path d="M0.500 16 h21" stroke="#2a6fb0" stroke-width="1" stroke-dasharray="1 1"/></svg>
<svg class="a" style="left:160px;top:735px" width="24" height="24" viewBox="0 0 48 48"><path d="M44 27.500 H16.500 C17 33 20.500 36.500 26 36.500 C29.500 36.500 32.500 35 34.500 32.500 H43 C40.500 39.500 34 44 26 44 C15.500 44 8 36.500 8 26 C8 15.500 15.500 8 26 8 C36.500 8 44 15.500 44 27.500Z M17 21.500 H35 C34 17 30.500 14.500 26 14.500 C21.500 14.500 18 17 17 21.500Z" fill="url(#gIE)"/><path d="M43.500 10 C46.500 3.500 40 1 30 5 C17 10 4 26 2 38 C0.500 46 7 46.500 14 42 C8 44 5.500 42 7 36 C9.500 26 20 13 31 8.500 C38 5.500 42 6.500 40.500 11Z" fill="#f0c02c"/></svg>
<svg class="a" style="left:208px;top:738px" width="22" height="20" viewBox="0 0 22 20"><path d="M8 1 L14 0 L21 2.500 V11 L14 14 L8 11.500Z" fill="#dcdcd8"/><path d="M14 3.500 L21 2.500 V11 L14 14Z" fill="#b9b9b4"/><path d="M8 1 L14 3.500 V14 L8 11.500Z" fill="#4a5a4c"/><rect x="10" y="4.500" width="2.500" height="3" fill="#7fd08a"/><path d="M0 11 L8 8.500 L15 11 V17 L7 19.500 L0 17Z" fill="#c9c9c4"/><path d="M0 11 L7 13.500 V19.500 L0 17Z" fill="#e4e4e0"/><rect x="1.500" y="14" width="1.800" height="2.500" fill="#333"/><rect x="4.300" y="15" width="1.800" height="2.500" fill="#333"/></svg>
<div class="a tt" style="left:235px;top:739px">设备管理器</div>
<svg class="a" style="left:369px;top:737px" width="23" height="20" viewBox="0 0 23 20"><path d="M7 0 L22 3.500 V15 L7 11.500Z" fill="#3a9be8"/><path d="M8 1.500 L21 4.500 V13.500 L8 10.500Z" fill="#62b8f6"/><path d="M11.500 6.500 l2.200 2.800 4-4.300" stroke="#fff" stroke-width="1.500" fill="none"/><path d="M0 15.500 L7 13 L16 16 L9 19Z" fill="#e8eaec"/><path d="M9 12.500 l5 1.300 -1.500 1.200 -5 -1.300z" fill="#cfd4d8"/></svg>
<div class="a tt" style="left:396px;top:739px">控制面板\所有控制...</div>
<svg class="a" style="left:804px;top:744px" width="12" height="7" viewBox="0 0 12 7"><path d="M0.500 6.500 L6 1 L11.500 6.500" fill="none" stroke="#fff" stroke-width="1.200"/></svg>
<svg class="a" style="left:826px;top:741px" width="16" height="14" viewBox="0 0 16 14"><rect x="3.600" y="0.600" width="11.800" height="8.800" fill="none" stroke="#fff" stroke-width="1.200"/><rect x="0.600" y="1.600" width="4" height="4.500" fill="#04080f" stroke="#fff" stroke-width="1.200"/><path d="M2.600 6.500 V12.800 H13 M8.500 9.500 V12.800" stroke="#fff" stroke-width="1.200" fill="none"/></svg>
<svg class="a" style="left:850px;top:741px" width="17" height="14" viewBox="0 0 17 14"><path d="M0.600 4.800 H3.300 L6.600 1.500 V12.500 L3.300 9.200 H0.600Z" fill="none" stroke="#fff" stroke-width="1.100"/><path d="M8.800 4.800 Q10 7 8.800 9.200 M10.800 3 Q13 7 10.800 11 M13 1.300 Q16.200 7 13 12.700" fill="none" stroke="#fff" stroke-width="1.100"/></svg>
<div class="a tt" style="left:877px;top:739px;font-size:11.500px">简体</div>
<div class="a tt" style="left:934px;top:730px;letter-spacing:.15px">上午 11:39</div>
<div class="a tt" style="left:913.500px;top:749px;letter-spacing:.4px">2017/6/20 星期二</div>
<i class="a" style="left:1019px;top:728px;width:1px;height:40px;background:#5a6068"></i>
</div></div>
<svg class="a" style="left:884px;top:701px;opacity:.8" width="120" height="60" viewBox="0 0 120 60"><path d="M0.400 0.600 H8.600 V9.500 H27 V3.500 L38 2.500 V18.400 H25.600 V30 H6.500 V40.300 H0.400 V23.900 H15.400 V18.400 H0.400Z M8.500 32 H33.200 V49.800 H21.500 V37 H8.500Z" fill="#1c4f90"/><rect x="41" y="27" width="76" height="30" fill="#1c3c6c" opacity=".12"/></svg>
</body>
</html>
